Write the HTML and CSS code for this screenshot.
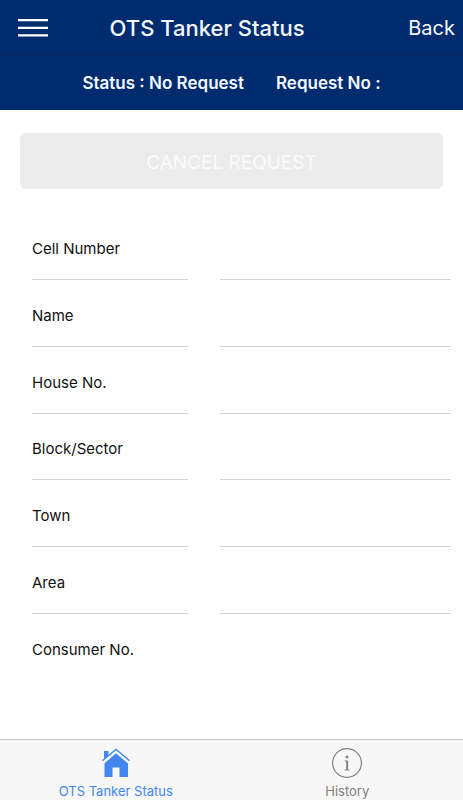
FILE: index.html
```html
<!DOCTYPE html>
<html lang="en">
<head>
<meta charset="utf-8">
<meta name="viewport" content="width=device-width, initial-scale=1">
<title>OTS Tanker Status</title>
<link rel="stylesheet" href="styles.css">
</head>
<body>
<header class="header">
  <div class="toolbar">
    <button class="menu" type="button" aria-label="Menu">
      <svg width="30" height="18" viewBox="0 0 30 18" fill="#fff" aria-hidden="true"><path d="M0 0h30v2.300H0zM0 7.700h30V10H0zM0 15.300h30v2.300H0z"/></svg>
    </button>
    <h1 class="title">OTS Tanker Status</h1>
    <a class="back" href="#">Back</a>
  </div>
  <div class="status">
    <span>Status : No Request</span>
    <span>Request No :</span>
  </div>
</header>
<main class="main">
  <button class="cancel" type="button" disabled>CANCEL REQUEST</button>
  <form class="details">
    <div class="row"><label class="label" for="cell">Cell Number</label><input class="value" id="cell" readonly></div>
    <div class="row"><label class="label" for="name">Name</label><input class="value" id="name" readonly></div>
    <div class="row"><label class="label" for="house">House No.</label><input class="value" id="house" readonly></div>
    <div class="row"><label class="label" for="block">Block/Sector</label><input class="value" id="block" readonly></div>
    <div class="row"><label class="label" for="town">Town</label><input class="value" id="town" readonly></div>
    <div class="row"><label class="label" for="area">Area</label><input class="value" id="area" readonly></div>
    <div class="row"><label class="label" for="consumer">Consumer No.</label><input class="value" id="consumer" readonly></div>
  </form>
</main>
<nav class="tabs">
  <a class="tab active" href="#">
    <svg width="30" height="32" viewBox="0 0 30 32" aria-hidden="true">
      <path fill="currentColor" d="M3 4h4.500v4.500L3 12.500zM15 6.200l12 10.300V30H18.500v-9.500h-7V30H3.500V16.200z"/>
      <path fill="none" stroke="currentColor" stroke-width="1.300" d="M1.300 13.800L15 2.400l13.700 11.400"/>
    </svg>
    <span>OTS Tanker Status</span>
  </a>
  <a class="tab" href="#">
    <svg width="32" height="32" viewBox="0 0 32 32" aria-hidden="true">
      <circle cx="16" cy="16" r="14.400" fill="none" stroke="currentColor" stroke-width="1.200"/>
      <circle cx="16" cy="10" r="1.500" fill="currentColor"/>
      <path fill="currentColor" d="M13.700 13.600h3.400v8.800h1.400v1H13.700v-1h1.500v-7.800h-1.500z"/>
    </svg>
    <span>History</span>
  </a>
</nav>
</body>
</html>
```
FILE: styles.css
```css
* {
  box-sizing: border-box;
}

body {
  margin: 0;
  min-height: 100vh;
  display: flex;
  flex-direction: column;
  background: #fff;
  color: #111;
  font-family: Inter, "Liberation Sans", sans-serif;
}

button {
  border: 0;
  font: inherit;
}

a {
  text-decoration: none;
}

.header {
  background: #002c6f;
  color: #f4f8ff;
}

.toolbar {
  display: flex;
  align-items: center;
  height: 55px;
  padding: 2px 8px 0 18px;
  border-bottom: 1px solid #05265f;
}

.menu {
  display: flex;
  padding: 0;
  background: none;
}

.title {
  flex: 1;
  margin: 0;
  padding-right: 42px;
  text-align: center;
  font-size: 22px;
  line-height: 28px;
  font-weight: 500;
}

.back {
  color: inherit;
  font-size: 20px;
  line-height: 28px;
}

.status {
  display: flex;
  justify-content: center;
  gap: 32px;
  padding: 17px 0 15px;
  font-size: 17px;
  line-height: 23px;
  font-weight: 600;
}

.main {
  flex: 1;
  display: flex;
  flex-direction: column;
  padding: 23px 0 58px;
}

.cancel {
  height: 56px;
  margin: 0 20px;
  padding: 2px 0 0;
  border-radius: 6px;
  background: #ececec;
  color: #fafafa;
  font-size: 19px;
}

.details {
  flex: 1;
  display: grid;
  grid-auto-rows: 1fr;
  margin-top: 24px;
  padding: 0 12px 0 32px;
}

.row {
  display: grid;
  grid-template-columns: 27fr 40fr;
  column-gap: 32px;
}

.label,
.value {
  min-width: 0;
  padding: 6px 0 0;
  border: 0;
  border-bottom: 1px solid #d4d4d4;
  background: none;
  font: inherit;
  font-size: 15px;
  line-height: 20px;
  outline: 0;
}

.label {
  display: flex;
  align-items: center;
}

.row:last-child > * {
  border-bottom-color: transparent;
}

.tabs {
  display: grid;
  grid-template-columns: 1fr 1fr;
  border-top: 1px solid #c4c4c4;
  background: #f7f7f7;
}

.tab {
  display: flex;
  flex-direction: column;
  align-items: center;
  gap: 4px;
  padding: 7px 0 1px;
  color: #808080;
  font-size: 13px;
  line-height: 16px;
}

.active {
  color: #4287f0;
}
```
